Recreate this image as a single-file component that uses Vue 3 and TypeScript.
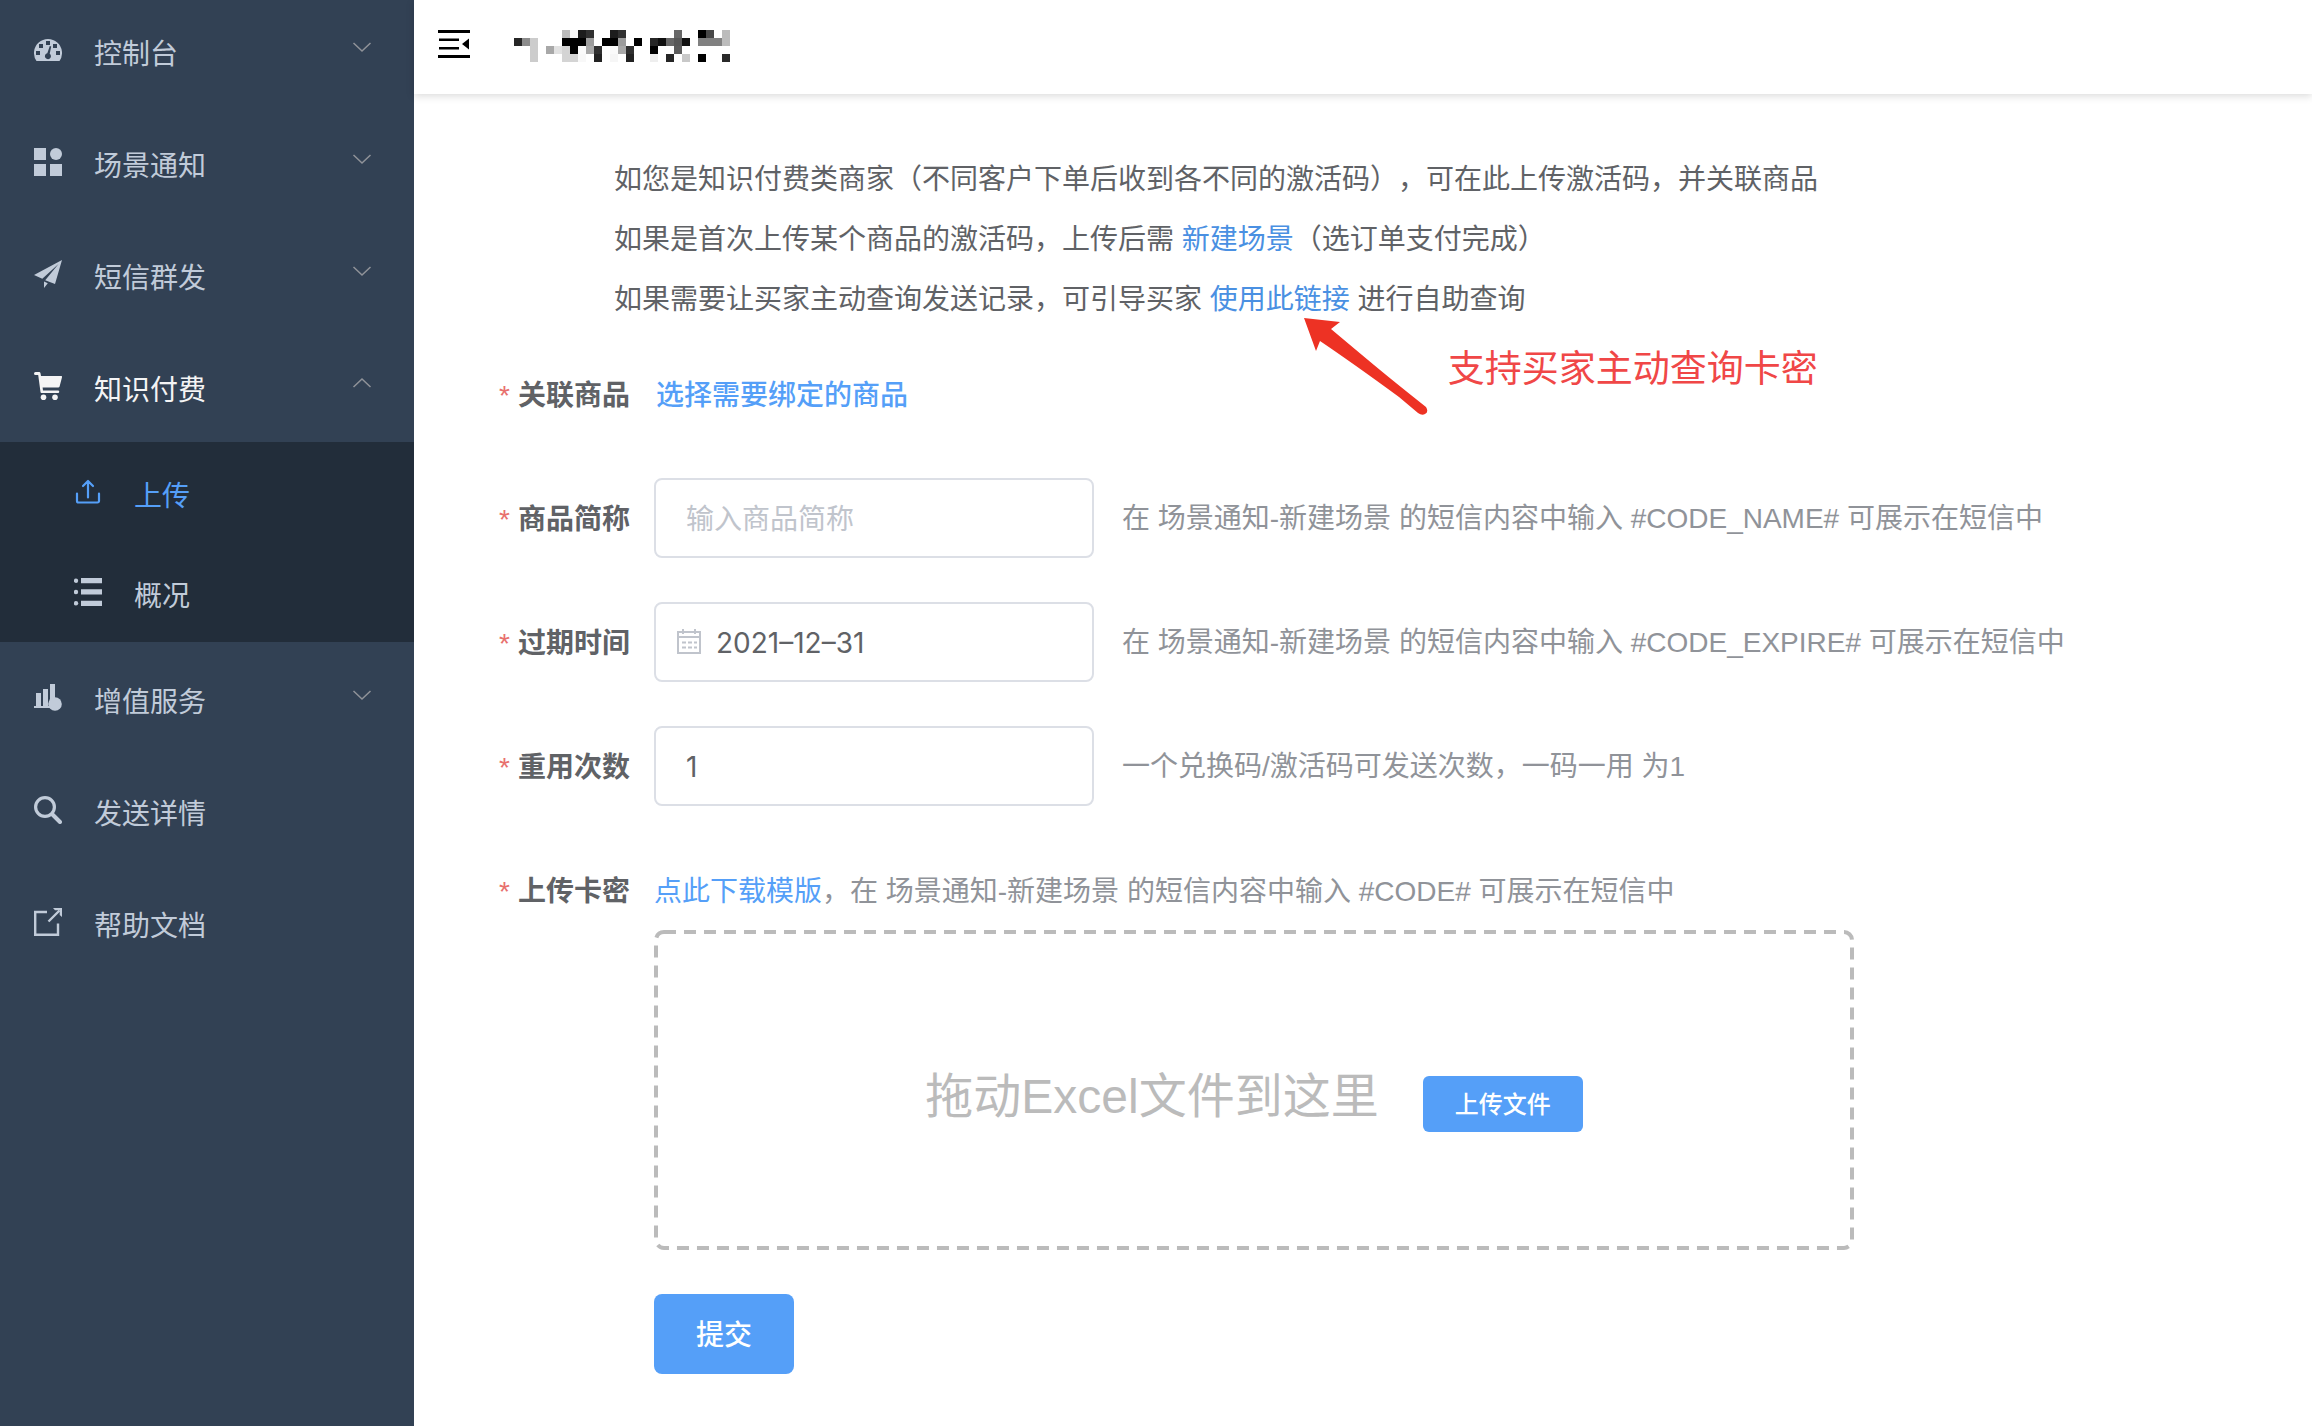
<script setup lang="ts">
import { ref } from 'vue'

interface MenuEntry {
  icon: string
  label: string
  expandable?: boolean
  open?: boolean
  children?: { icon: string; label: string; active?: boolean }[]
}

const menu: MenuEntry[] = [
  { icon: 'dashboard', label: '控制台', expandable: true },
  { icon: 'grid', label: '场景通知', expandable: true },
  { icon: 'send', label: '短信群发', expandable: true },
  {
    icon: 'cart',
    label: '知识付费',
    expandable: true,
    open: true,
    children: [
      { icon: 'upload', label: '上传', active: true },
      { icon: 'list', label: '概况' },
    ],
  },
  { icon: 'chart', label: '增值服务', expandable: true },
  { icon: 'search', label: '发送详情' },
  { icon: 'external', label: '帮助文档' },
]

const icons: Record<string, string> = {
  dashboard:
    '<path fill-rule="evenodd" d="M2.500 25A14 14 0 1 1 25.500 25ZM2 19h4v-4h-4ZM5 12h4v-4h-4ZM12 9h4v-4h-4ZM19 12h4v-4h-4ZM22 19h4v-4h-4ZM15.800 10L13.300 17.200A3 3 0 1 0 15.700 17.700L17.200 10.400Z"/>',
  grid: '<path d="M0 0h12v12H0zM0 16h12v12H0zM16 16h12v12H16z"/><circle cx="22" cy="6" r="6"/>',
  send: '<path d="M28 0L0 15L8.300 18.800L24.500 4L11.200 20.200L21 24ZM10 21.600L13.800 23.200L10 28Z"/>',
  cart:
    '<path d="M1.500 0H5a1.500 1.500 0 0 1 1.500 1.200L7 4H27a1 1 0 0 1 1 1.300L25.600 14.500a1.500 1.500 0 0 1-1.500 1H8.600L9 18.500H24a1 1 0 0 1 0 2.500H7.500a1 1 0 0 1-1-1L4.200 3H1.500a1.500 1.500 0 0 1 0-3Z"/><circle cx="9.500" cy="25.200" r="2.800"/><circle cx="21" cy="25.200" r="2.800"/>',
  upload:
    '<path fill="none" stroke="currentColor" stroke-width="2.200" stroke-linecap="round" stroke-linejoin="round" d="M3 15.500V23a1.500 1.500 0 0 0 1.500 1.500H23.500A1.500 1.500 0 0 0 25 23V15.500M14 19.500V3.500M9 8L14 3L19 8"/>',
  list:
    '<path d="M7 0h21v5.300H7zM7 11.300h21v5.300H7zM7 22.700h21V28H7z"/><circle cx="2" cy="2.700" r="2.200"/><circle cx="2" cy="14" r="2.200"/><circle cx="2" cy="25.300" r="2.200"/>',
  chart:
    '<path d="M2 9h5v13H2zM9 5h5v17H9zM16 0h5v16h-5zM0 22h18v2H0z"/><circle cx="21" cy="20" r="6.800"/>',
  search:
    '<g fill="none" stroke="currentColor"><circle cx="11" cy="11" r="9.400" stroke-width="3.200"/><path stroke-width="4" stroke-linecap="round" d="M18.500 18.500L26 26"/></g>',
  external:
    '<path fill="none" stroke="currentColor" stroke-width="2.400" d="M13 4H1.200V26.800H24V15.500M14.500 13.500L25.500 2.500"/><path d="M19 0h9v9l-2.300-2V2.300H21Z"/>',
}

// Each mosaic tile: column, row, grey level
const tiles: [number, number, number][] = [
  [6, 0, 187], [7, 0, 248], [8, 0, 28], [9, 0, 48], [12, 0, 28], [13, 0, 48], [20, 0, 104], [23, 0, 0], [24, 0, 72], [26, 0, 188],
  [0, 1, 38], [1, 1, 140], [2, 1, 204], [6, 1, 0], [7, 1, 0], [8, 1, 0], [9, 1, 156], [11, 1, 0], [12, 1, 0], [13, 1, 156], [15, 1, 0],
  [17, 1, 38], [18, 1, 16], [19, 1, 104], [20, 1, 88], [21, 1, 18], [23, 1, 128], [24, 1, 128], [25, 1, 128], [26, 1, 188],
  [2, 2, 204], [4, 2, 168], [5, 2, 226], [6, 2, 212], [7, 2, 0], [8, 2, 250], [9, 2, 168], [10, 2, 48], [12, 2, 250], [13, 2, 168], [14, 2, 48], [17, 2, 0], [20, 2, 92],
  [2, 3, 204], [6, 3, 212], [7, 3, 212], [8, 3, 248], [10, 3, 34], [12, 3, 246], [14, 3, 34], [17, 3, 238], [19, 3, 38], [21, 3, 200], [23, 3, 0], [26, 3, 42],
]

const shortName = ref('')
const expireDate = ref('2021–12–31')
const reuseCount = ref('1')
</script>

<template>
  <div class="app">
    <aside class="sidebar">
      <nav>
        <template v-for="item in menu" :key="item.label">
          <a href="#" class="menu-item" :class="{ open: item.open }">
            <svg class="icon" viewBox="0 0 28 28" fill="currentColor" aria-hidden="true" v-html="icons[item.icon]"></svg>
            <span>{{ item.label }}</span>
            <svg v-if="item.expandable" class="chevron" viewBox="0 0 24 24" aria-hidden="true">
              <path :d="item.open ? 'M3.500 16L12 8L20.500 16' : 'M3.500 8L12 16L20.500 8'" />
            </svg>
          </a>
          <div v-if="item.children" class="submenu">
            <a v-for="child in item.children" :key="child.label" href="#" class="menu-item sub" :class="{ active: child.active }">
              <svg class="icon" viewBox="0 0 28 28" fill="currentColor" aria-hidden="true" v-html="icons[child.icon]"></svg>
              <span>{{ child.label }}</span>
            </a>
          </div>
        </template>
      </nav>
    </aside>

    <div class="page">
      <header class="topbar">
        <button class="fold" type="button" aria-label="收起菜单">
          <svg width="32" height="28" viewBox="0 0 32 28" aria-hidden="true">
            <path d="M0 0h32v3H0zM1 8.500h20V11H1zM1 17h20v2.500H1zM0 25h32v3H0zM24 14L31 8.500V19.500Z" />
          </svg>
        </button>
        <svg class="mosaic" width="216" height="36" viewBox="0 0 216 36" shape-rendering="crispEdges" aria-hidden="true">
          <rect
            v-for="([col, row, grey], i) in tiles"
            :key="i"
            :x="col * 8"
            :y="row * 8 + 4"
            width="8"
            height="8"
            :fill="`rgb(${grey},${grey},${grey})`"
          />
        </svg>
      </header>

      <main>
        <section class="intro">
          <p>如您是知识付费类商家（不同客户下单后收到各不同的激活码），可在此上传激活码，并关联商品</p>
          <p>如果是首次上传某个商品的激活码，上传后需 <a href="#">新建场景</a>（选订单支付完成）</p>
          <p>
            如果需要让买家主动查询发送记录，可引导买家
            <span class="anchor"><a href="#">使用此链接</a><span class="callout">
              <svg width="124" height="100" viewBox="0 0 124 100" aria-hidden="true">
                <path d="M0 0L36 4L27 11Q52 32 70 47T122 89Q125 94 121 96Q118 98 114 95L95 79Q50 46 16 23L12 33Z" />
              </svg>
              <strong>支持买家主动查询卡密</strong>
            </span></span>
            进行自助查询
          </p>
        </section>

        <form @submit.prevent>
          <div class="row">
            <label for="goods">关联商品</label>
            <button id="goods" class="text-button" type="button">选择需要绑定的商品</button>
          </div>
          <div class="row">
            <label for="short-name">商品简称</label>
            <input id="short-name" v-model="shortName" type="text" placeholder="输入商品简称" />
            <span class="hint">在 场景通知-新建场景 的短信内容中输入 #CODE_NAME# 可展示在短信中</span>
          </div>
          <div class="row">
            <label for="expire">过期时间</label>
            <div class="date-field">
              <svg width="24" height="26" viewBox="0 0 24 26" aria-hidden="true">
                <path d="M1 4H23V25H1ZM1 9H23M6 1V6M18 1V6" />
                <path stroke-dasharray="4 2" d="M5 14.500H20M5 19.500H20" />
              </svg>
              <input id="expire" v-model="expireDate" type="text" />
            </div>
            <span class="hint">在 场景通知-新建场景 的短信内容中输入 #CODE_EXPIRE# 可展示在短信中</span>
          </div>
          <div class="row">
            <label for="reuse">重用次数</label>
            <input id="reuse" v-model="reuseCount" type="text" inputmode="numeric" />
            <span class="hint">一个兑换码/激活码可发送次数，一码一用 为1</span>
          </div>
          <div class="row upload-row">
            <label for="pick-file">上传卡密</label>
            <div class="upload">
              <div class="template"><a href="#">点此下载模版</a>，在 场景通知-新建场景 的短信内容中输入 #CODE# 可展示在短信中</div>
              <div class="drop">
                <svg class="outline" aria-hidden="true"><rect x="2" y="2" rx="8" /></svg>
                <span>拖动Excel文件到这里</span>
                <button id="pick-file" class="primary small" type="button">上传文件</button>
              </div>
            </div>
          </div>
          <div class="actions">
            <button class="primary" type="submit">提交</button>
          </div>
        </form>
      </main>
    </div>
  </div>
</template>

<style>
body {
  margin: 0;
  background: #fff;
}
</style>

<style scoped>
.app,
.app button,
.app input {
  font-family: "Liberation Sans", "Noto Sans CJK SC", sans-serif;
  font-size: 28px;
}

.app {
  display: flex;
  min-height: 100vh;
  color: #606266;
  text-spacing-trim: space-all;
}

.app * {
  box-sizing: border-box;
}

a {
  color: #4a90e2;
  text-decoration: none;
}

button {
  border: 0;
  padding: 0;
  background: none;
  cursor: pointer;
}

.sidebar {
  flex: 0 0 414px;
  overflow: hidden;
  background: #324154;
}

.sidebar nav {
  margin-top: -6px;
}

.menu-item {
  display: flex;
  align-items: center;
  gap: 32px;
  height: 112px;
  padding: 0 40px 0 34px;
  color: #c1cbd9;
}

.menu-item.open {
  color: #f4f4f5;
}

.menu-item span {
  flex: 1;
  padding-top: 4px;
}

.icon {
  width: 28px;
  height: 28px;
}

.chevron {
  width: 24px;
  height: 24px;
  margin-bottom: 6px;
  fill: none;
  stroke: #909399;
  stroke-width: 1.500;
}

.submenu {
  background: #222d3a;
}

.menu-item.sub {
  height: 100px;
  padding-left: 74px;
}

.menu-item.active {
  color: #559ff8;
}

.page {
  flex: 1;
  min-width: 0;
}

.topbar {
  display: flex;
  align-items: center;
  gap: 44px;
  height: 94px;
  padding: 0 24px 6px;
  box-shadow: 0 2px 8px rgba(0, 0, 0, 0.15);
}

.fold {
  display: flex;
}

main {
  padding: 56px 40px 52px;
}

.intro {
  padding-left: 160px;
  margin-bottom: 24px;
}

.intro p {
  margin: 0;
  line-height: 60px;
}

.anchor {
  position: relative;
}

.callout {
  position: absolute;
  top: 34px;
  left: 94px;
  display: flex;
  align-items: center;
  gap: 20px;
  white-space: nowrap;
  pointer-events: none;
}

.callout svg {
  fill: #ed3224;
}

.callout strong {
  padding-top: 4px;
  color: #f04747;
  font-size: 37px;
  font-weight: 400;
}

.row {
  display: flex;
  align-items: center;
  min-height: 80px;
  margin-bottom: 44px;
}

.row > label {
  flex: 0 0 200px;
  padding: 4px 24px 0 0;
  text-align: right;
  font-weight: 700;
  line-height: 76px;
}

.row > label::before {
  content: "*";
  margin-right: 8px;
  color: #e8706d;
  font-weight: 400;
}

.text-button {
  padding: 0 0 2px 2px;
  color: #559ff8;
  font-weight: 500;
}

input {
  width: 440px;
  height: 80px;
  padding: 2px 30px 0;
  border: 2px solid #dcdfe6;
  border-radius: 8px;
  background: #fff;
  color: #606266;
  outline: none;
}

.app input {
  font-family: Inter, "Noto Sans CJK SC", sans-serif;
}

input::placeholder {
  color: #c0c4cc;
}

.date-field {
  position: relative;
}

.date-field svg {
  position: absolute;
  top: 26px;
  left: 23px;
  fill: none;
  stroke: #c0c4cc;
  stroke-width: 2;
}

.date-field input {
  display: block;
  padding-left: 60px;
}

.hint {
  margin-left: 28px;
  padding-bottom: 4px;
  color: #909399;
}

.upload-row {
  align-items: flex-start;
}

.upload {
  flex: 0 1 1200px;
}

.template {
  padding-top: 4px;
  color: #909399;
  line-height: 76px;
}

.template a {
  color: #559ff8;
}

.drop {
  position: relative;
  display: flex;
  align-items: baseline;
  justify-content: center;
  gap: 44px;
  height: 320px;
  padding-top: 14px;
  color: #bbb;
  font-size: 48px;
  line-height: 306px;
}

.outline {
  position: absolute;
  inset: 0;
  width: 100%;
  height: 100%;
}

.outline rect {
  width: calc(100% - 4px);
  height: calc(100% - 4px);
  fill: none;
  stroke: #bbb;
  stroke-width: 4;
  stroke-dasharray: 12 8;
}

.primary {
  width: 140px;
  height: 80px;
  padding-bottom: 2px;
  border-radius: 8px;
  background: #559ff8;
  color: #fff;
  font-weight: 500;
}

.app .primary.small {
  position: relative;
  width: 160px;
  height: 56px;
  border-radius: 6px;
  font-size: 24px;
}

.actions {
  padding-left: 200px;
}
</style>
